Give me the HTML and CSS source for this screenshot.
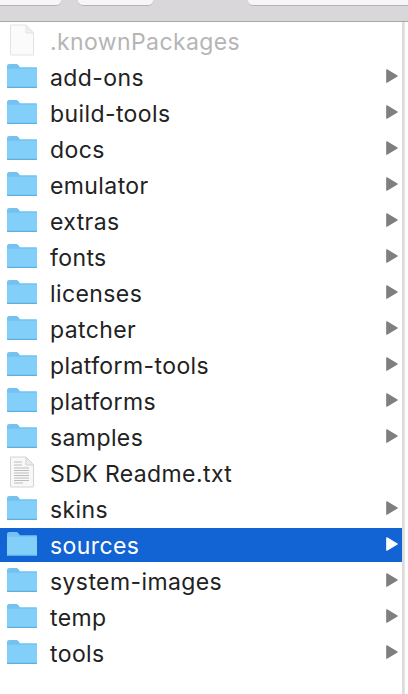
FILE: index.html
```html
<!DOCTYPE html>
<html lang="en">

<head>
    <meta charset="UTF-8">
    <meta name="viewport" content="width=device-width, initial-scale=1.0">
    <title>sdk folder</title>
    <link rel="stylesheet" href="styles.css">
</head>

<body>
    <svg class="defs" width="0" height="0">
        <symbol id="folder" viewBox="0 0 32 26">
            <path d="M1 3.500C1 2 1.800 1 3.200 1H10c1 0 1.600.3 2.200 1l1.800 2.200H30c.7 0 1 .4 1 1V24c0 .7-.4 1-1 1H2c-.7 0-1-.4-1-1z" fill="#74c2f1"/>
            <path d="M1 7c0-.9.400-1.300 1.200-1.300h27.600c.8 0 1.200.4 1.200 1.300v17c0 .7-.4 1-1 1H2c-.7 0-1-.4-1-1z" fill="#82d0fa"/>
            <path d="M1 23.800h30V24c0 .7-.4 1-1 1H2c-.7 0-1-.4-1-1z" fill="#5fafe0"/>
        </symbol>
        <symbol id="file" viewBox="0 0 26 32">
            <path d="M1.500 1H17l7.500 8v21.500c0 .3-.2.500-.5.500H2c-.3 0-.5-.2-.5-.5z" fill="#fbfbfb" stroke="#e3e3e3"/>
            <path d="M17 1v8h7.500z" fill="#f0f0f0" stroke="#e3e3e3" stroke-linejoin="round"/>
        </symbol>
        <symbol id="textfile" viewBox="0 0 26 32">
            <path d="M1.500 1H17l7.500 8v21.500c0 .3-.2.500-.5.500H2c-.3 0-.5-.2-.5-.5z" fill="#f8f8f8" stroke="#d4d4d4"/>
            <path d="M17 1v8h7.500z" fill="#ececec" stroke="#d4d4d4" stroke-linejoin="round"/>
            <path d="M5 6h8M5 9h8M5 12h15M5 14.500h15M5 17h15M5 19.500h15M5 22h15M5 24.500h15M5 27h9" stroke="#bcbcbc" stroke-width="1.200"/>
        </symbol>
        <symbol id="arrow" viewBox="0 0 12 14">
            <path d="M.8.800L11.200 7 .8 13.200z" fill="currentColor" stroke="currentColor" stroke-width="1.200" stroke-linejoin="round"/>
        </symbol>
    </svg>

    <div class="toolbar">
        <div class="tab tab-first"></div>
        <div class="tab tab-second"></div>
        <div class="tab tab-third"></div>
    </div>

    <div class="pane">
        <ul class="list" id="fileList"></ul>
    </div>

    <script>
        const items = [
            { name: '.knownPackages', type: 'hidden' },
            { name: 'add-ons' },
            { name: 'build-tools' },
            { name: 'docs' },
            { name: 'emulator' },
            { name: 'extras' },
            { name: 'fonts' },
            { name: 'licenses' },
            { name: 'patcher' },
            { name: 'platform-tools' },
            { name: 'platforms' },
            { name: 'samples' },
            { name: 'SDK Readme.txt', type: 'text' },
            { name: 'skins' },
            { name: 'sources', selected: true },
            { name: 'system-images' },
            { name: 'temp' },
            { name: 'tools' }
        ];

        const fileList = document.getElementById('fileList');

        // Render rows
        items.forEach(item => {
            const row = document.createElement('li');
            row.className = 'row';
            if (item.selected) row.classList.add('selected');
            if (item.type === 'hidden') row.classList.add('hidden-file');

            let icon = '<svg class="icon folder"><use href="#folder"/></svg>';
            if (item.type === 'hidden') icon = '<svg class="icon doc"><use href="#file"/></svg>';
            if (item.type === 'text') icon = '<svg class="icon doc"><use href="#textfile"/></svg>';

            const arrow = item.type ? '' : '<svg class="arrow"><use href="#arrow"/></svg>';
            row.innerHTML = `${icon}<span class="name">${item.name}</span>${arrow}`;
            fileList.appendChild(row);
        });
    </script>
</body>

</html>
```

FILE: styles.css
```css
body {
    margin: 0;
    height: 694px;
    overflow: hidden;
    background-color: #fff;
    font-family: Inter, "Liberation Sans", sans-serif;
}

.defs {
    position: absolute;
}

/* Top bar */
.toolbar {
    display: flex;
    height: 21px;
    background-color: #d9d7d9;
    border-bottom: 1px solid #a9a7a9;
}

.tab {
    height: 5px;
    background-color: #f6f6f6;
    border-bottom: 1px solid #b4b2b4;
    border-radius: 0 0 5px 5px;
}

.tab-first {
    width: 61px;
    border-radius: 0 0 5px 0;
}

.tab-second {
    width: 75px;
    margin-left: 17px;
}

.tab-third {
    flex: 1;
    margin-left: 95px;
    border-radius: 0 0 0 5px;
}

/* File list */
.pane {
    width: 402px;
    height: 672px;
    box-shadow: 1px 0 0 #dcdcdc, 2px 0 0 #dcdcdc, 3px 0 0 #e4e4e4;
}

.list {
    display: flex;
    flex-direction: column;
    gap: 2px;
    margin: 0;
    padding: 2px 0 0;
    list-style: none;
}

.row {
    display: flex;
    align-items: center;
    height: 34px;
    color: #222;
    font-size: 23px;
    letter-spacing: 0.4px;
}

.icon {
    flex: none;
    margin-bottom: 2px;
}

.icon.folder {
    width: 32px;
    height: 26px;
    margin-left: 6px;
}

.icon.doc {
    width: 26px;
    height: 32px;
    margin-left: 9px;
    margin-right: 3px;
}

.name {
    margin-left: 12px;
    padding-top: 2px;
    flex: 1;
}

.arrow {
    width: 12px;
    height: 14px;
    margin-right: 4px;
    margin-bottom: 2px;
    color: #7f7f7f;
}

.hidden-file {
    color: #b5b5b5;
}

.selected {
    background-color: #1263d3;
    color: #fff;
}

.selected .arrow {
    color: #fff;
}
```
